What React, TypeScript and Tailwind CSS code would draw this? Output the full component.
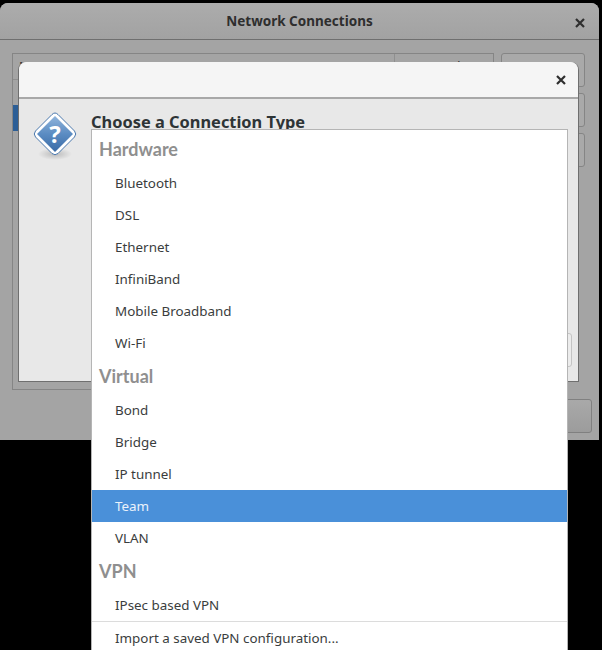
const font = "font-['Noto_Sans',sans-serif]";

function CloseIcon({ className }: { className: string }) {
  return (
    <svg width="12" height="12" viewBox="0 0 12 12" className={className}>
      <path d="M2 2 L10 10 M10 2 L2 10" stroke="currentColor" strokeWidth="2.2" />
    </svg>
  );
}

function QuestionIcon() {
  return (
    <svg width="46" height="50" viewBox="0 0 46 50" className="shrink-0">
      <defs>
        <linearGradient id="diamond" x1="0" y1="0" x2="0" y2="1">
          <stop offset="0" stopColor="#8fb4dc" />
          <stop offset="0.5" stopColor="#5b8cc2" />
          <stop offset="1" stopColor="#3a6ba6" />
        </linearGradient>
        <radialGradient id="shade">
          <stop offset="0" stopColor="#000" stopOpacity="0.2" />
          <stop offset="1" stopColor="#000" stopOpacity="0" />
        </radialGradient>
      </defs>
      <ellipse cx="23" cy="42" rx="17" ry="6" fill="url(#shade)" />
      <path d="M23 1 Q24.5 1 26 2.5 L42.5 19 Q45 22 42.5 25 L26 41.5 Q23 44 20 41.5 L3.5 25 Q1 22 3.5 19 L20 2.5 Q21.5 1 23 1 Z" fill="#fff" stroke="#4a78ad" strokeWidth="1" />
      <path d="M23 4 L41 22 L23 40 L5 22 Z" fill="url(#diamond)" />
      <text x="23" y="30.5" textAnchor="middle" fontSize="24" fontWeight="700" fill="#fff" fontFamily="Noto Sans, sans-serif">?</text>
    </svg>
  );
}

function Heading({ label }: { label: string }) {
  return (
    <div className="flex h-[35px] items-center pb-[2px] pl-[7px] font-['Lato',sans-serif] text-[18px] font-bold leading-none text-[#8f8f8f]">
      {label}
    </div>
  );
}

function Item({ label, active }: { label: string; active?: boolean }) {
  return (
    <div
      className={
        active
          ? "flex h-8 items-center bg-[#4a90d9] pl-[23px] text-[13.4px] text-[#eaf2fb]"
          : "flex h-8 items-center pl-[23px] text-[13.4px] text-[#3a3d3d]"
      }
    >
      {label}
    </div>
  );
}

export default function App() {
  return (
    <div className={`relative h-[650px] w-[602px] overflow-hidden bg-black ${font}`}>
      {/* parent window, dimmed */}
      <div className="absolute left-0 top-[3px] flex h-[437px] w-[599px] flex-col rounded-t-lg bg-[#a4a4a4]">
        <div className="relative flex h-[37px] shrink-0 items-center justify-center rounded-t-lg border-b border-[#6f6f6f] bg-gradient-to-b from-[#acacac] to-[#a2a2a2] text-[13.5px] font-bold text-[#2e2e2e]">
          Network Connections
          <CloseIcon className="absolute right-[13px] top-[14px] text-[#2e2e2e]" />
        </div>
        <div className="flex flex-1 flex-col pl-3 pr-[14px] pt-[13px]">
          <div className="flex gap-[7px]">
            <div className="h-[337px] w-[482px] border border-[#858585]">
              <div className="flex h-[26px] border-b border-[#8f8f8f] text-[13px] text-[#333]">
                <div className="flex-1 pl-[6px] pt-[3px]">Name</div>
                <div className="w-[99px] border-l border-[#8f8f8f] pl-[6px] pt-[3px]">Last Used</div>
              </div>
              <div className="mt-[25px] h-[26px] w-[7px] bg-[#2c5e96]" />
            </div>
            <div className="flex flex-col gap-[6px]">
              <div className="h-[34px] w-[84px] rounded-[3px] border border-[#858585] bg-[#a9a9a9]" />
              <div className="h-[34px] w-[84px] rounded-[3px] border border-[#858585] bg-[#a9a9a9]" />
              <div className="h-[34px] w-[84px] rounded-[3px] border border-[#858585] bg-[#a9a9a9]" />
            </div>
          </div>
          <div className="mr-[-7px] mt-[9px] flex justify-end">
            <div className="h-[34px] w-[120px] rounded-[3px] border border-[#808080] bg-gradient-to-b from-[#a9a9a9] to-[#9c9c9c]" />
          </div>
        </div>
      </div>

      {/* Choose a Connection Type dialog */}
      <div className="absolute left-[18px] top-[62px] flex h-[320px] w-[561px] flex-col rounded-t-lg border-b border-l border-r border-[#6f6f6f] bg-[#e8e8e8]">
        <div className="flex h-[37px] shrink-0 items-center justify-end rounded-t-lg border-b-2 border-[#a8a8a8] bg-[#f5f5f5] pr-[11px]">
          <CloseIcon className="text-[#2e2e2e]" />
        </div>
        <div className="flex flex-1 gap-[13px] pl-[13px] pt-[13px]">
          <QuestionIcon />
          <div className="flex flex-1 flex-col pr-[6px]">
            <div className="mt-[2px] text-[16.4px] font-bold leading-none text-[#2e3436]">Choose a Connection Type</div>
            <div className="ml-auto mt-[203px] h-[34px] w-[40px] rounded-[3px] border border-[#c4c4c4] bg-[#ececec]" />
          </div>
        </div>
      </div>

      {/* open menu */}
      <div className="absolute left-[91px] top-[129px] h-[530px] w-[477px] border-l border-r border-t border-[#b5b5b5] bg-white">
        <div className="h-[2px]" />
        <Heading label="Hardware" />
        <Item label="Bluetooth" />
        <Item label="DSL" />
        <Item label="Ethernet" />
        <Item label="InfiniBand" />
        <Item label="Mobile Broadband" />
        <Item label="Wi-Fi" />
        <Heading label="Virtual" />
        <Item label="Bond" />
        <Item label="Bridge" />
        <Item label="IP tunnel" />
        <Item label="Team" active />
        <Item label="VLAN" />
        <Heading label="VPN" />
        <Item label="IPsec based VPN" />
        <div className="h-px bg-[#dcdcdc]" />
        <Item label="Import a saved VPN configuration..." />
      </div>
    </div>
  );
}
